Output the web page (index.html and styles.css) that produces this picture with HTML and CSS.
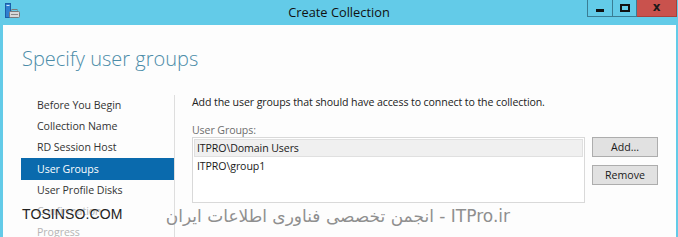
FILE: index.html
```html
<!DOCTYPE html>
<html>
<head>
<meta charset="utf-8">
<link rel="stylesheet" href="styles.css">
</head>
<body>
<div class="window">
  <div class="titlebar">
    <svg class="app-icon" width="16" height="16" viewBox="0 0 16 16">
      <rect x="0.5" y="0.5" width="5" height="14" fill="#2f7fd0" stroke="#1b5ea8"/>
      <rect x="1.5" y="2" width="3" height="1" fill="#cfe6ff"/>
      <rect x="4.5" y="8.5" width="10" height="6" rx="1" fill="#d8d8d8" stroke="#7a7a7a"/>
      <rect x="7" y="6.5" width="5" height="2" fill="none" stroke="#7a7a7a"/>
      <rect x="6" y="11" width="7" height="1" fill="#8a8a8a"/>
    </svg>
    <div class="title">Create Collection</div>
    <div class="controls">
      <div class="ctl ctl-min"><span class="glyph-min"></span></div>
      <div class="ctl ctl-max"><span class="glyph-max"></span></div>
      <div class="ctl ctl-close"><span class="glyph-close">x</span></div>
    </div>
  </div>
  <div class="client">
    <h1 class="heading">Specify user groups</h1>
    <div class="main">
      <ul class="nav">
        <li>Before You Begin</li>
        <li>Collection Name</li>
        <li>RD Session Host</li>
        <li class="active">User Groups</li>
        <li>User Profile Disks</li>
        <li class="disabled">Confirmation</li>
        <li class="disabled">Progress</li>
      </ul>
      <div class="content">
        <p class="intro">Add the user groups that should have access to connect to the collection.</p>
        <div class="label">User Groups:</div>
        <div class="groups">
          <div class="listbox">
            <div class="item selected">ITPRO\Domain Users</div>
            <div class="item">ITPRO\group1</div>
          </div>
          <div class="buttons">
            <button class="btn">Add...</button>
            <button class="btn">Remove</button>
          </div>
        </div>
      </div>
    </div>
    <div class="wm-left">TOSINSO.COM</div>
    <div class="wm-right" dir="rtl">ITPro.ir - انجمن تخصصی فناوری اطلاعات ایران</div>
  </div>
</div>
</body>
</html>
```
FILE: styles.css
```css
* { box-sizing: border-box; }
html, body { margin: 0; padding: 0; }
body {
  width: 678px;
  height: 237px;
  overflow: hidden;
  font-family: "Open Sans", "Noto Sans", sans-serif;
}
.window {
  width: 678px;
  height: 237px;
  background: #63cbe8;
  display: flex;
  flex-direction: column;
}
.titlebar {
  height: 25px;
  flex: none;
  position: relative;
  display: flex;
  align-items: center;
  justify-content: center;
}
.app-icon {
  position: absolute;
  left: 5px;
  top: 3px;
}
.title {
  font-size: 12.8px;
  color: #111;
  line-height: 24px;
  margin-top: -1px;
}
.controls {
  position: absolute;
  right: 1px;
  top: 0;
  display: flex;
}
.ctl {
  height: 17px;
  border: 1px solid #3a7d94;
  border-top: none;
  display: flex;
  align-items: center;
  justify-content: center;
}
.ctl-min { width: 26px; }
.ctl-max { width: 24px; border-left: none; }
.ctl-close { width: 40px; background: #c9524d; border-color: #a8403b; border-left: none; }
.glyph-min { width: 8px; height: 3px; background: #111; margin-top: 4px; }
.glyph-max { width: 10px; height: 8px; border: 2px solid #111; }
.glyph-close {
  font-family: "DejaVu Sans", sans-serif;
  font-weight: bold;
  font-size: 12px;
  line-height: 12px;
  color: #1a1a1a;
  margin-top: -2px;
}
.client {
  flex: 1;
  background: #fdfdfd;
  margin: 0 2px 0 3px;
  position: relative;
  overflow: hidden;
}
.heading {
  margin: 0;
  padding: 19px 0 0 19px;
  height: 70px;
  font-size: 20px;
  font-weight: 300;
  color: #4b8ca8;
  line-height: 30px;
}
.main {
  display: flex;
  height: 142px;
}
.nav {
  list-style: none;
  margin: 0;
  padding: 0 0 0 18px;
  width: 171px;
  font-size: 10.6px;
  letter-spacing: -0.05px;
  color: #333;
}
.nav li {
  height: 21px;
  line-height: 21px;
  padding-left: 16px;
  white-space: nowrap;
}
.nav li.active {
  background: #0a6aad;
  color: #fff;
  height: 22px;
  line-height: 22px;
}
.nav li.disabled { color: #b5b5b5; }
.content {
  border-left: 1px solid #dedede;
  padding-left: 17px;
  flex: 1;
  font-size: 10.6px;
  letter-spacing: -0.1px;
  color: #222;
}
.intro {
  margin: 0;
  line-height: 14px;
  padding-top: 0;
}
.label {
  margin-top: 14px;
  color: #6d6d6d;
  line-height: 14px;
}
.groups {
  display: flex;
  align-items: flex-start;
  gap: 7px;
}
.listbox {
  width: 393px;
  height: 66px;
  border: 1px solid #d9d9d9;
  background: #fff;
  padding: 1px;
}
.item {
  height: 18px;
  line-height: 17px;
  padding-left: 2px;
  color: #1a1a1a;
  border: 1px solid transparent;
}
.item.selected {
  background: #f0f0f0;
  border-color: #e0e0e0;
}
.buttons {
  display: flex;
  flex-direction: column;
  gap: 8px;
}
.btn {
  width: 66px;
  height: 20px;
  padding: 0;
  border: 1px solid #adadad;
  background: #e1e1e1;
  font-family: "Open Sans", "Noto Sans", sans-serif;
  font-size: 10.6px;
  color: #1a1a1a;
  line-height: 18px;
}
.wm-left {
  position: absolute;
  left: 19px;
  top: 181px;
  font-family: "Liberation Sans", sans-serif;
  font-size: 14px;
  color: #222;
  text-shadow: 0 0 1px #fff;
  letter-spacing: 0.1px;
}
.wm-right {
  position: absolute;
  left: 169px;
  top: 181px;
  width: 338px;
  font-family: "DejaVu Sans", sans-serif;
  font-size: 17px;
  color: #8f8f8f;
  white-space: nowrap;
}
```
